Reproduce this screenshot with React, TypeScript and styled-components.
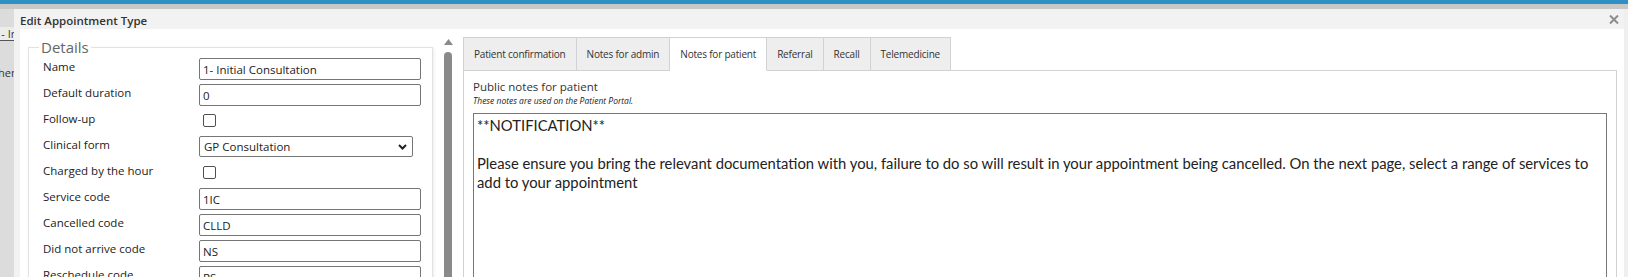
import { Fragment } from "react"
import styled, { createGlobalStyle } from "styled-components"

const GlobalStyle = createGlobalStyle`
    html, body {
        margin: 0;
        padding: 0;
        background: #d9d9d9;
        font-family: "Open Sans", "Noto Sans", sans-serif;
        color: #222;
        overflow: hidden;
    }
`

const Page = styled.div`
    width: 1628px;
    height: 277px;
    display: flex;
    flex-direction: column;
    overflow: hidden;
`

const TopBar = styled.div`
    height: 4px;
    background: #2f90c5;
    border-bottom: 5px solid #c8c8c8;
    flex-shrink: 0;
`

const Main = styled.div`
    flex: 1;
    display: flex;
    min-height: 0;
`

const Backdrop = styled.div`
    width: 14px;
    flex-shrink: 0;
    overflow: hidden;
    background: #dcdcdc;
    display: flex;
    flex-direction: column;
`

const BackdropField = styled.div`
    margin-top: 18px;
    height: 13px;
    background: #ececec;
    border-bottom: 1px solid #555;
    font-size: 11px;
    line-height: 13px;
    color: #4a3020;
    white-space: nowrap;
    text-indent: -5px;
`

const BackdropText = styled.div`
    margin-top: 24px;
    font-size: 11px;
    color: #333;
    white-space: nowrap;
    text-indent: -2px;
`

const RightEdge = styled.div`
    width: 4px;
    flex-shrink: 0;
    background: #efefef;
`

const Dialog = styled.div`
    flex: 1;
    display: flex;
    flex-direction: column;
    background: #f2f2f2;
    min-width: 0;
`

const TitleBar = styled.div`
    height: 20px;
    display: flex;
    align-items: center;
    justify-content: space-between;
    padding: 0 5px 0 6px;
    flex-shrink: 0;
`

const Title = styled.div`
    font-size: 11.5px;
    font-weight: 600;
    color: #333;
    padding-top: 3px;
`

const CloseButton = styled.div`
    width: 10px;
    height: 10px;
    display: flex;
    align-items: center;
    justify-content: center;
    cursor: pointer;
`

const Body = styled.div`
    flex: 1;
    margin-left: 6px;
    background: #fff;
    display: flex;
    align-items: flex-start;
    padding: 8px 7px 0 8px;
    overflow: hidden;
`

const Details = styled.fieldset`
    box-sizing: border-box;
    width: 405px;
    flex-shrink: 0;
    margin: 0;
    padding: 1px 11px 12px 14px;
    border: 1px solid #e2e2e2;
    box-shadow: 1px 1px 3px rgba(0, 0, 0, 0.08);
    display: grid;
    grid-template-columns: 156px 222px;
    grid-auto-rows: 22px;
    row-gap: 4px;
`

const Legend = styled.legend`
    font-size: 15px;
    line-height: 20px;
    color: #666;
    padding: 0 2px;
    margin-left: -4px;
`

const Label = styled.div`
    font-size: 11.5px;
    line-height: 18px;
    color: #222;
    white-space: nowrap;
`

const TextInput = styled.input`
    box-sizing: border-box;
    width: 222px;
    height: 22px;
    margin: 0;
    padding: 1px 3px 0;
    border: 1px solid #767676;
    border-radius: 2px;
    font-family: "Open Sans", "Noto Sans", sans-serif;
    font-size: 11.5px;
    color: #222;
    background: #fff;
    outline: none;
`

const SelectBox = styled.div`
    box-sizing: border-box;
    width: 214px;
    height: 21px;
    border: 1px solid #767676;
    border-radius: 2px;
    display: flex;
    align-items: center;
    justify-content: space-between;
    padding: 0 5px 0 4px;
    font-size: 11.5px;
    color: #222;
`

const CheckBox = styled.span`
    box-sizing: border-box;
    width: 13px;
    height: 13px;
    margin: 4px 0 0 4px;
    border: 1px solid #4f4f4f;
    border-radius: 2px;
    background: #fff;
`

const ScrollColumn = styled.div`
    width: 30px;
    flex-shrink: 0;
    align-self: stretch;
    display: flex;
    flex-direction: column;
    align-items: center;
    margin-top: -8px;
    padding-top: 10px;
    box-sizing: border-box;
`

const ScrollThumb = styled.div`
    margin-top: 7px;
    width: 8px;
    flex: 1;
    background: #8a8a8a;
    border-radius: 4px 4px 0 0;
`

const TabsArea = styled.div`
    flex: 1;
    min-width: 0;
    display: flex;
    flex-direction: column;
`

const TabBar = styled.div`
    display: flex;
    height: 34px;
    position: relative;
    z-index: 1;
`

const Tab = styled.div<{ $active?: boolean }>`
    display: flex;
    align-items: center;
    padding: 0 10px;
    font-size: 10px;
    letter-spacing: -0.2px;
    color: #333;
    background: ${p => (p.$active ? "#fff" : "#eeeeee")};
    border: 1px solid #d2d2d6;
    border-left-width: 0;
    border-bottom-color: ${p => (p.$active ? "#fff" : "#d2d2d6")};
    white-space: nowrap;
    cursor: pointer;

    &:first-child {
        border-left-width: 1px;
    }
`

const TabPanel = styled.div`
    flex: 1;
    margin-top: -1px;
    border: 1px solid #d2d2d6;
    padding: 8px 9px 0;
`

const NotesLabel = styled.div`
    font-size: 11.5px;
    line-height: 16px;
    color: #333;
`

const NotesHint = styled.div`
    font-size: 8.5px;
    line-height: 12px;
    font-style: italic;
    color: #222;
`

const NotesBox = styled.div`
    margin-top: 6px;
    height: 200px;
    border: 1px solid #777;
    padding: 2px 3px;
    font-family: "Lato", "Open Sans", sans-serif;
    font-size: 14.8px;
    line-height: 19px;
    color: #222;
    white-space: pre-wrap;
`

const detailRows: { label: string; kind: "text" | "check" | "select"; value?: string }[] = [
    { label: "Name", kind: "text", value: "1- Initial Consultation" },
    { label: "Default duration", kind: "text", value: "0" },
    { label: "Follow-up", kind: "check" },
    { label: "Clinical form", kind: "select", value: "GP Consultation" },
    { label: "Charged by the hour", kind: "check" },
    { label: "Service code", kind: "text", value: "1IC" },
    { label: "Cancelled code", kind: "text", value: "CLLD" },
    { label: "Did not arrive code", kind: "text", value: "NS" },
    { label: "Reschedule code", kind: "text", value: "RS" },
]

const tabs = ["Patient confirmation", "Notes for admin", "Notes for patient", "Referral", "Recall", "Telemedicine"]

const notes =
    "**NOTIFICATION**\n\nPlease ensure you bring the relevant documentation with you, failure to do so will result in your appointment being cancelled. On the next page, select a range of services to add to your appointment"

const App = () => {
    return (
        <Page>
            <GlobalStyle />
            <TopBar />
            <Main>
                <Backdrop>
                    <BackdropField>1- Initial</BackdropField>
                    <BackdropText>hen</BackdropText>
                </Backdrop>
                <Dialog>
                    <TitleBar>
                        <Title>Edit Appointment Type</Title>
                        <CloseButton>
                            <svg width="10" height="9" viewBox="0 0 10 9">
                                <path d="M1 0.5 L9 8.5 M9 0.5 L1 8.5" stroke="#8c8c8c" strokeWidth="2" />
                            </svg>
                        </CloseButton>
                    </TitleBar>
                    <Body>
                        <Details>
                            <Legend>Details</Legend>
                            {detailRows.map(row => (
                                <Fragment key={row.label}>
                                    <Label>{row.label}</Label>
                                    {row.kind === "text" && <TextInput defaultValue={row.value} readOnly />}
                                    {row.kind === "check" && <CheckBox />}
                                    {row.kind === "select" && (
                                        <SelectBox>
                                            {row.value}
                                            <svg width="9" height="6" viewBox="0 0 9 6">
                                                <path d="M1 1 L4.5 4.5 L8 1" stroke="#222" strokeWidth="2" fill="none" />
                                            </svg>
                                        </SelectBox>
                                    )}
                                </Fragment>
                            ))}
                        </Details>
                        <ScrollColumn>
                            <svg width="9" height="6" viewBox="0 0 9 6">
                                <path d="M4.5 0 L9 6 L0 6 Z" fill="#8a8a8a" />
                            </svg>
                            <ScrollThumb />
                        </ScrollColumn>
                        <TabsArea>
                            <TabBar>
                                {tabs.map(t => (
                                    <Tab key={t} $active={t === "Notes for patient"}>
                                        {t}
                                    </Tab>
                                ))}
                            </TabBar>
                            <TabPanel>
                                <NotesLabel>Public notes for patient</NotesLabel>
                                <NotesHint>These notes are used on the Patient Portal.</NotesHint>
                                <NotesBox>{notes}</NotesBox>
                            </TabPanel>
                        </TabsArea>
                    </Body>
                </Dialog>
                <RightEdge />
            </Main>
        </Page>
    )
}

export default App
